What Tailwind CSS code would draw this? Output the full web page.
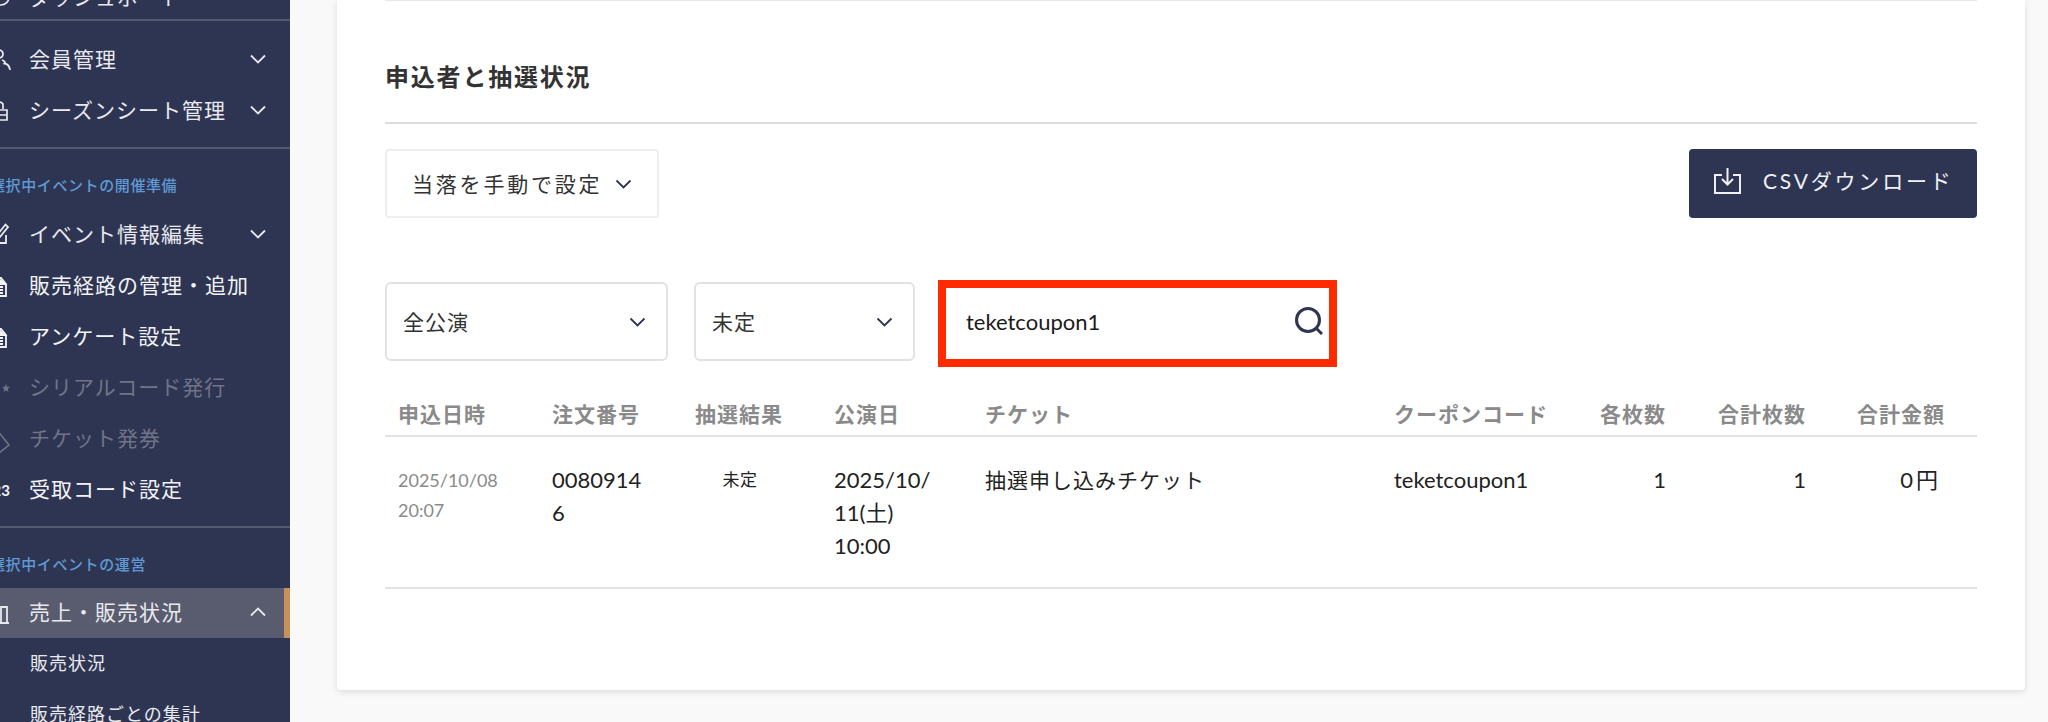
<!DOCTYPE html>
<html lang="ja">

<head>
    <meta charset="UTF-8" />
    <meta name="viewport" content="width=device-width, initial-scale=1.0" />
    <title>申込者と抽選状況</title>
    <script src="https://cdn.jsdelivr.net/npm/@tailwindcss/browser@4"></script>
</head>

<body class="h-[722px] overflow-hidden bg-[#f9f9f9] font-['Lato','Noto_Sans_CJK_JP',sans-serif] text-[#222222]">
    <div class="flex h-[722px] overflow-hidden">

        <!-- sidebar -->
        <nav class="w-[290px] shrink-0 overflow-hidden bg-[#2e3552] text-[21px] tracking-[1px] text-[#e8e9ee]">
            <div class="flex h-[19px] items-end pb-[12px]">
                <div class="flex items-center">
                    <div class="flex w-[29px] shrink-0 justify-end pr-[18px]">
                        <svg class="h-[20px] w-[20px] shrink-0" viewBox="0 0 20 20" fill="none" stroke="currentColor" stroke-width="1.6"><circle cx="10" cy="10" r="8" /><path d="M10 10l4-4" /></svg>
                    </div>
                    <span class="leading-[20px]">ダッシュボード</span>
                </div>
            </div>
            <div class="h-[2px] bg-[#545a72]"></div>

            <div class="pt-[13px]">
                <div class="flex h-[51px] items-center pb-[2px]">
                    <div class="flex w-[29px] shrink-0 justify-end pr-[18px]">
                        <svg class="mt-[3px] h-[22px] w-[22px] shrink-0" viewBox="0 0 22 22" fill="none" stroke="currentColor" stroke-width="1.8"><circle cx="10" cy="5" r="4" /><path d="M10.500 10.500c-3 1-3.500 2.500-2.500 4-2 .5-3 2-3 6" /><path d="M13 11c3 1 3.500 2.500 2.500 3.500 3 .5 5 2.500 5.500 6.500" /></svg>
                    </div>
                    <span class="flex-1">会員管理</span>
                    <svg class="mr-[24px] h-[10px] w-[16px]" viewBox="0 0 16 10" fill="none" stroke="currentColor" stroke-width="1.8"><path d="M1 1.500l7 7 7-7" /></svg>
                </div>
                <div class="flex h-[51px] items-center pb-[2px]">
                    <div class="flex w-[29px] shrink-0 justify-end pr-[21px]">
                        <svg class="mt-[2px] h-[22px] w-[20px] shrink-0" viewBox="0 0 20 22" fill="none" stroke="currentColor" stroke-width="1.7"><path d="M5 9V5c0-2 1-3 5-3s5 1 5 3v4" /><path d="M1 10h18v10H1zM1 15h18M10 10v5" /></svg>
                    </div>
                    <span class="flex-1">シーズンシート管理</span>
                    <svg class="mr-[24px] h-[10px] w-[16px]" viewBox="0 0 16 10" fill="none" stroke="currentColor" stroke-width="1.8"><path d="M1 1.500l7 7 7-7" /></svg>
                </div>
            </div>
            <div class="mt-[11px] h-[2px] bg-[#545a72]"></div>

            <p class="-ml-[10px] pb-[12px] pt-[24px] text-[15px] font-medium leading-[24px] tracking-[.6px] text-[#5f9ad6]">選択中イベントの開催準備</p>
            <div class="flex h-[51px] items-center pb-[2px]">
                <div class="flex w-[29px] shrink-0 justify-end pr-[19px]">
                    <svg class="h-[22px] w-[22px] shrink-0" viewBox="0 0 22 22" fill="none" stroke="currentColor" stroke-width="1.8"><path d="M3 8v12h15v-8M3 8l5-5h4M12 14l8-10-2.500-2.500-8 10-.5 3z" /></svg>
                </div>
                <span class="flex-1">イベント情報編集</span>
                <svg class="mr-[24px] h-[10px] w-[16px]" viewBox="0 0 16 10" fill="none" stroke="currentColor" stroke-width="1.8"><path d="M1 1.500l7 7 7-7" /></svg>
            </div>
            <div class="flex h-[51px] items-center pb-[2px] text-[#f2f3f6]">
                <div class="flex w-[29px] shrink-0 justify-end pr-[21px]">
                    <svg class="mt-[5px] h-[20px] w-[18px] shrink-0" viewBox="0 0 18 20" fill="none" stroke="currentColor" stroke-width="1.8"><path d="M2 7l6-6h3l5 6v12H2zM5 10h8M5 13h8M5 16h8" /><path d="M9 2l6 5H9z" fill="currentColor" /></svg>
                </div>
                <span>販売経路の管理・追加</span>
            </div>
            <div class="flex h-[51px] items-center pb-[2px] text-[#f2f3f6]">
                <div class="flex w-[29px] shrink-0 justify-end pr-[21px]">
                    <svg class="mt-[5px] h-[20px] w-[18px] shrink-0" viewBox="0 0 18 20" fill="none" stroke="currentColor" stroke-width="1.8"><path d="M2 7l6-6h3l5 6v12H2zM5 10h8M5 13h8M5 16h8" /><path d="M9 2l6 5H9z" fill="currentColor" /></svg>
                </div>
                <span>アンケート設定</span>
            </div>
            <div class="flex h-[51px] items-center pb-[2px] text-[#6f7488]">
                <div class="flex w-[29px] shrink-0 justify-end pr-[19px]">
                    <svg class="mt-[3px] h-[8px] w-[8px] shrink-0" viewBox="0 0 10 10" fill="currentColor"><path d="M5 0l1.300 3.400L10 3.700 7.200 6l.9 4L5 7.800 1.900 10l.9-4L0 3.700l3.700-.3z" /></svg>
                </div>
                <span>シリアルコード発行</span>
            </div>
            <div class="flex h-[51px] items-center pb-[2px] text-[#6f7488]">
                <div class="flex w-[29px] shrink-0 justify-end pr-[19px]">
                    <svg class="mt-[6px] h-[26px] w-[26px] shrink-0" viewBox="0 0 26 26" fill="none" stroke="currentColor" stroke-width="1.600"><path d="M13 2l12 15-10 8L2 10z" /></svg>
                </div>
                <span>チケット発券</span>
            </div>
            <div class="flex h-[51px] items-center pb-[2px] text-[#f2f3f6]">
                <div class="flex w-[29px] shrink-0 justify-end pr-[19px]">
                    <span class="mt-[3px] shrink-0 text-[15px] font-bold tracking-normal">123</span>
                </div>
                <span>受取コード設定</span>
            </div>
            <div class="mt-[11px] h-[2px] bg-[#545a72]"></div>

            <p class="-ml-[10px] pb-[12px] pt-[24px] text-[15px] font-medium leading-[24px] tracking-[.6px] text-[#5f9ad6]">選択中イベントの運営</p>
            <div class="flex h-[50px] items-center border-r-[6px] border-[#c9915a] bg-[#595c6e] pb-[2px]">
                <div class="flex w-[29px] shrink-0 justify-end pr-[20px]">
                    <svg class="mt-[3px] h-[20px] w-[20px] shrink-0" viewBox="0 0 20 20" fill="none" stroke="currentColor" stroke-width="1.800"><path d="M0 19h20M12 19V3h6v16" /></svg>
                </div>
                <span class="flex-1">売上・販売状況</span>
                <svg class="mr-[18px] h-[10px] w-[16px]" viewBox="0 0 16 10" fill="none" stroke="currentColor" stroke-width="1.8"><path d="M1 8.500l7-7 7 7" /></svg>
            </div>
            <div class="flex h-[51px] items-center pl-[30px] text-[18px] tracking-[1px]">販売状況</div>
            <div class="flex h-[50px] items-center pl-[30px] text-[18px] tracking-[1px]">販売経路ごとの集計</div>
        </nav>

        <!-- main -->
        <main class="flex-1 pl-[47px] pr-[24px]">
            <section class="h-[690px] rounded-b-[4px] bg-white px-[48px] shadow-[0_2px_6px_rgba(0,0,0,0.12)]">
                <div class="h-px bg-[#e8e8e8]"></div>
                <h2 class="mt-[58px] text-[24px] font-bold leading-[36px] tracking-[1.8px] text-[#333333]">申込者と抽選状況</h2>
                <div class="mt-[27px] h-[2px] bg-[#dddddd]"></div>

                <div class="mt-[25px] flex items-start justify-between">
                    <button class="flex h-[69px] w-[274px] items-center rounded-[4px] border-2 border-[#eeeeee] bg-white pl-[25px] text-[21px] tracking-[2.800px] text-[#333333]">
                        <span>当落を手動で設定</span>
                        <svg class="ml-[13px] h-[10px] w-[17px]" viewBox="0 0 16 10" fill="none" stroke="#2e3552" stroke-width="1.8"><path d="M1 1.500l7 7 7-7" /></svg>
                    </button>
                    <button class="flex h-[69px] w-[288px] items-center rounded-[4px] bg-[#2e3552] pb-[6px] pl-[25px] text-[21px] tracking-[2.800px] text-[#eef0f4]">
                        <svg class="h-[26px] w-[27px]" viewBox="0 0 27 26" fill="none" stroke="currentColor" stroke-width="2"><path d="M8 7H1v18h25V7h-7" /><path d="M13.500 0v16M8 11l5.500 5.500L19 11" /></svg>
                        <span class="ml-[22px]">CSVダウンロード</span>
                    </button>
                </div>

                <div class="mt-[62px] flex h-[87px] items-start">
                    <div class="mt-[2px] flex h-[79px] w-[283px] items-center justify-between rounded-[6px] border-2 border-[#e2e2e2] bg-white pl-[16px] pr-[20px] text-[21px] tracking-[1px] text-[#333333]">
                        <span>全公演</span>
                        <svg class="h-[10px] w-[17px]" viewBox="0 0 16 10" fill="none" stroke="#2e3552" stroke-width="1.8"><path d="M1 1.500l7 7 7-7" /></svg>
                    </div>
                    <div class="ml-[26px] mt-[2px] flex h-[79px] w-[221px] items-center justify-between rounded-[6px] border-2 border-[#e2e2e2] bg-white pl-[16px] pr-[20px] text-[21px] tracking-[1px] text-[#333333]">
                        <span>未定</span>
                        <svg class="h-[10px] w-[17px]" viewBox="0 0 16 10" fill="none" stroke="#2e3552" stroke-width="1.8"><path d="M1 1.500l7 7 7-7" /></svg>
                    </div>
                    <div class="ml-[23px] flex h-[87px] w-[399px] items-center justify-between border-[8px] border-[#ff2a00] bg-white pb-[5px] pl-[20px] pr-[6px] text-[22px] text-[#1a1a1a]">
                        <span>teketcoupon1</span>
                        <svg class="h-[28px] w-[28px]" viewBox="0 0 28 28" fill="none" stroke="#2e3552" stroke-width="3"><circle cx="13" cy="13" r="11.500" /><path d="M21 21l6 6" /></svg>
                    </div>
                </div>

                <table class="mt-[27px] w-full table-fixed border-collapse">
                    <colgroup>
                        <col class="w-[154px]" />
                        <col class="w-[143px]" />
                        <col class="w-[139px]" />
                        <col class="w-[151px]" />
                        <col class="w-[409px]" />
                        <col class="w-[179px]" />
                        <col class="w-[116px]" />
                        <col class="w-[140px]" />
                        <col class="w-[161px]" />
                    </colgroup>
                    <thead>
                        <tr class="h-[42px] border-b-2 border-[#e2e2e2] text-left text-[21px] tracking-[1px] text-[#8a8a8a]">
                            <th class="pb-[2px] pl-[13px] font-bold">申込日時</th>
                            <th class="pb-[2px] pl-[13px] font-bold">注文番号</th>
                            <th class="pb-[2px] pl-[13px] font-bold">抽選結果</th>
                            <th class="pb-[2px] pl-[13px] font-bold">公演日</th>
                            <th class="pb-[2px] pl-[13px] font-bold">チケット</th>
                            <th class="whitespace-nowrap pb-[2px] pl-[13px] font-bold">クーポンコード</th>
                            <th class="pb-[2px] pr-[10px] text-right font-bold">各枚数</th>
                            <th class="pb-[2px] pr-[10px] text-right font-bold">合計枚数</th>
                            <th class="pb-[2px] pr-[32px] text-right font-bold">合計金額</th>
                        </tr>
                    </thead>
                    <tbody>
                        <tr class="h-[152px] border-b-2 border-[#e2e2e2] align-top text-[22px] leading-[33px]">
                            <td class="pl-[13px] pt-[28px] text-[18px] leading-[30px] text-[#8a8a8a]">2025/10/08<br />20:07</td>
                            <td class="pl-[13px] pt-[26px]">0080914<br />6</td>
                            <td class="pl-[13px] pr-[36px] pt-[26px] text-center text-[17px] tracking-[.6px]">未定</td>
                            <td class="pl-[13px] pt-[26px]">2025/10/<br />11(土)<br />10:00</td>
                            <td class="pl-[13px] pt-[26px] text-[21px] tracking-[1px]">抽選申し込みチケット</td>
                            <td class="pl-[13px] pt-[26px]">teketcoupon1</td>
                            <td class="pr-[10px] pt-[26px] text-right">1</td>
                            <td class="pr-[10px] pt-[26px] text-right">1</td>
                            <td class="pr-[39px] pt-[26px] text-right"><span class="tracking-[3px]">0</span>円</td>
                        </tr>
                    </tbody>
                </table>
            </section>
        </main>
    </div>
</body>

</html>
